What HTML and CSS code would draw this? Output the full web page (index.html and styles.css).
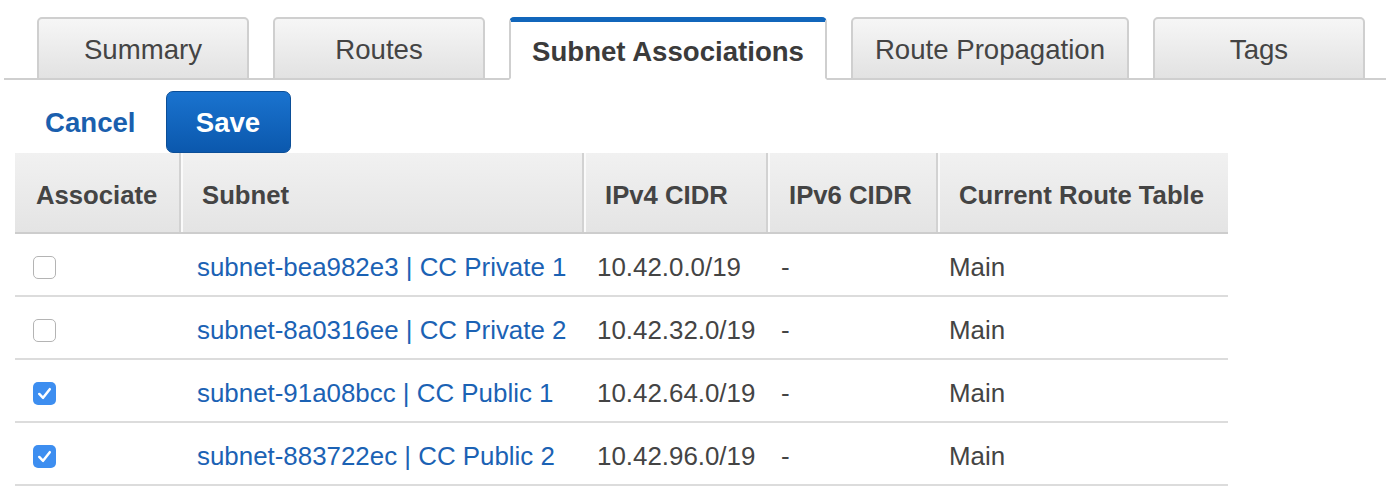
FILE: index.html
```html
<!DOCTYPE html>
<html>
<head>
<meta charset="utf-8">
<link rel="stylesheet" href="styles.css">
</head>
<body>
<div class="tabs">
  <div class="tab">Summary</div>
  <div class="tab">Routes</div>
  <div class="tab active">Subnet Associations</div>
  <div class="tab wide">Route Propagation</div>
  <div class="tab">Tags</div>
</div>
<div class="actions">
  <a class="cancel">Cancel</a>
  <button class="save">Save</button>
</div>
<table class="grid">
  <colgroup>
    <col class="c1"><col class="c2"><col class="c3"><col class="c4"><col class="c5">
  </colgroup>
  <thead>
    <tr>
      <th class="first">Associate</th>
      <th>Subnet</th>
      <th>IPv4 CIDR</th>
      <th>IPv6 CIDR</th>
      <th>Current Route Table</th>
    </tr>
  </thead>
  <tbody>
    <tr>
      <td><span class="cb"></span></td>
      <td class="link">subnet-bea982e3 | CC Private 1</td>
      <td>10.42.0.0/19</td>
      <td>-</td>
      <td class="main">Main</td>
    </tr>
    <tr>
      <td><span class="cb"></span></td>
      <td class="link">subnet-8a0316ee | CC Private 2</td>
      <td>10.42.32.0/19</td>
      <td>-</td>
      <td class="main">Main</td>
    </tr>
    <tr>
      <td><span class="cb on"><svg viewBox="0 0 24 24" width="24" height="24"><path d="M6.5 12.5 L10.5 16.5 L17.5 7.5" fill="none" stroke="#fff" stroke-width="2.6" stroke-linecap="round" stroke-linejoin="round"/></svg></span></td>
      <td class="link">subnet-91a08bcc | CC Public 1</td>
      <td>10.42.64.0/19</td>
      <td>-</td>
      <td class="main">Main</td>
    </tr>
    <tr>
      <td><span class="cb on"><svg viewBox="0 0 24 24" width="24" height="24"><path d="M6.5 12.5 L10.5 16.5 L17.5 7.5" fill="none" stroke="#fff" stroke-width="2.6" stroke-linecap="round" stroke-linejoin="round"/></svg></span></td>
      <td class="link">subnet-883722ec | CC Public 2</td>
      <td>10.42.96.0/19</td>
      <td>-</td>
      <td class="main">Main</td>
    </tr>
  </tbody>
</table>
</body>
</html>
```
FILE: styles.css
```css
* { box-sizing: border-box; }
body {
  margin: 0;
  background: #fff;
  font-family: "Liberation Sans", Arial, Helvetica, sans-serif;
  color: #444;
}
.tabs {
  display: flex;
  align-items: flex-end;
  gap: 24px;
  margin-left: 4px;
  padding-top: 17px;
  padding-left: 33px;
  border-bottom: 2px solid #cfcfcf;
  height: 80px;
}
.tab {
  width: 212px;
  height: 63px;
  margin-bottom: -2px;
  border: 2px solid #cfcfcf;
  border-radius: 5px 5px 0 0;
  background: linear-gradient(#f6f6f6, #e2e2e2);
  font-size: 27.6px;
  color: #444;
  display: flex;
  align-items: center;
  justify-content: center;
  padding-top: 3px;
}
.tab.wide { width: 278px; }
.tab.active {
  width: 318px;
  background: #fff;
  border-top: 5px solid #1166bb;
  border-bottom-color: #fff;
  font-weight: bold;
  color: #3b3b3b;
  padding-top: 4px;
}
.actions {
  display: flex;
  align-items: center;
  height: 73px;
  padding-top: 10px;
  padding-left: 45px;
}
.cancel {
  font-weight: bold;
  font-size: 27.6px;
  color: #1a5fae;
  margin-right: 30px;
  margin-top: 2px;
}
.save {
  width: 125px;
  height: 62px;
  border: 1px solid #0b4e97;
  border-radius: 7px;
  background: linear-gradient(#1a73cf, #0b58ad);
  color: #fff;
  font-family: inherit;
  font-weight: bold;
  font-size: 27.6px;
  padding: 3px 0 0;
}
.grid {
  margin-left: 15px;
  width: 1213px;
  border-collapse: collapse;
  table-layout: fixed;
}
.c1 { width: 165px; }
.c2 { width: 403px; }
.c3 { width: 184px; }
.c4 { width: 170px; }
.c5 { width: 291px; }
.grid th {
  height: 80px;
  background: linear-gradient(#f1f1f1, #e4e4e4);
  border-left: 2px solid #d2d2d2;
  box-shadow: inset 2px 0 0 #fafafa;
  border-bottom: 2px solid #cdcdcd;
  font-size: 25.7px;
  font-weight: bold;
  color: #444;
  text-align: left;
  padding: 5px 0 0 21px;
}
.grid th.first {
  border-left: none;
  box-shadow: none;
}
.grid td {
  height: 63px;
  border-bottom: 2px solid #dcdcdc;
  font-size: 25.9px;
  color: #444;
  padding: 5px 0 0 14px;
  white-space: nowrap;
}
.grid td:first-child { padding-left: 18px; }
.grid td.link { color: #1b62b4; padding-left: 17px; }
.grid td.main { padding-left: 12px; }
.cb {
  display: block;
  width: 23px;
  height: 23px;
  border: 1.5px solid #b4b4b4;
  border-radius: 5px;
  background: #fff;
}
.cb.on {
  border: none;
  background: #3d8ef0;
}
.cb svg { display: block; width: 23px; height: 23px; }
```
